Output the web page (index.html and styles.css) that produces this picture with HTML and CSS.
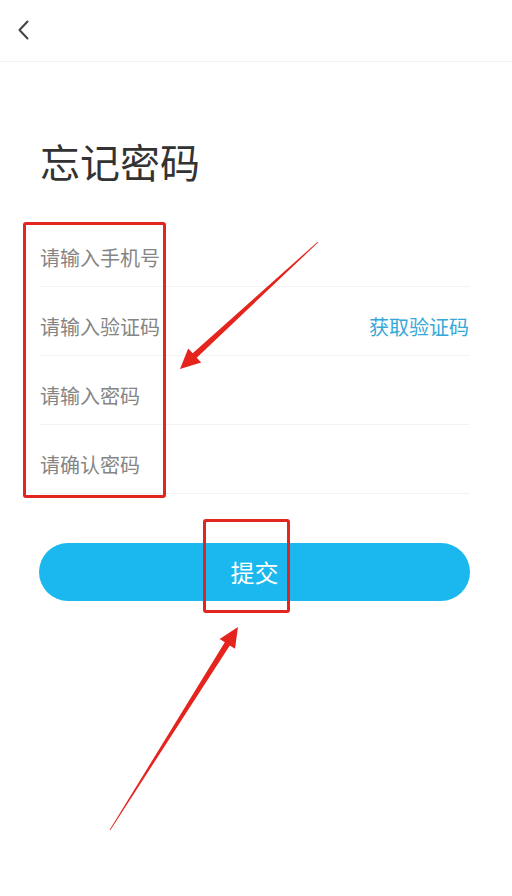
FILE: index.html
```html
<!DOCTYPE html>
<html lang="zh-CN">
<head>
<meta charset="utf-8">
<title>忘记密码</title>
<link rel="stylesheet" href="styles.css">
</head>
<body>
<div class="page">
  <header class="topbar">
    <svg class="back" width="14" height="20" viewBox="0 0 14 20"><path d="M10.5 1.5 L2.5 10 L10.5 18.5" fill="none" stroke="#444" stroke-width="2" stroke-linecap="round" stroke-linejoin="round"/></svg>
  </header>
  <main class="content">
    <h1 class="title">忘记密码</h1>
    <div class="form">
      <div class="row"><span class="ph">请输入手机号</span></div>
      <div class="row"><span class="ph">请输入验证码</span><span class="code">获取验证码</span></div>
      <div class="row"><span class="ph">请输入密码</span></div>
      <div class="row"><span class="ph">请确认密码</span></div>
    </div>
    <button class="submit">提交</button>
  </main>
  <div class="mark mark-fields"></div>
  <div class="mark mark-btn"></div>
  <svg class="arrows" width="512" height="896" viewBox="0 0 512 896">
    <polygon fill="#e5241d" points="318.3,242.3 196.7,357.7 201.2,362.6 180,369 188.2,348.4 192.7,353.3 317.7,241.7"/>
    <polygon fill="#e5241d" points="110.3,830.2 229.8,645.5 235.0,648.8 238,627 219.6,639.0 224.8,642.3 109.7,829.8"/>
  </svg>
</div>
</body>
</html>
```
FILE: styles.css
```css
html, body {
  margin: 0;
  padding: 0;
  background: #fff;
}
.page {
  position: relative;
  width: 512px;
  height: 896px;
  overflow: hidden;
  font-family: "Noto Sans CJK SC", "Noto Sans", sans-serif;
}
.topbar {
  height: 61px;
  border-bottom: 1px solid #f2f2f2;
  display: flex;
  align-items: center;
  padding-left: 17px;
  box-sizing: content-box;
}
.back {
  display: block;
  margin-top: -1px;
}
.content {
  padding: 0 42px 0 40px;
}
.title {
  margin: 79px 0 0 0;
  font-size: 40px;
  line-height: 40px;
  font-weight: 400;
  color: #333;
}
.form {
  margin-top: 37px;
}
.row {
  display: flex;
  justify-content: space-between;
  align-items: center;
  padding: 30px 0 18px 0;
  border-bottom: 1px solid #f3f3f3;
  font-size: 20px;
  line-height: 20px;
}
.ph {
  color: #858585;
}
.code {
  color: #34a8d8;
  margin-right: 1px;
}
.submit {
  display: block;
  width: 431px;
  margin: 49px 0 0 -1px;
  height: 58px;
  border: none;
  border-radius: 29px;
  background: #1ab8ee;
  color: #fff;
  font-family: "Noto Sans CJK SC", "Noto Sans", sans-serif;
  font-size: 24px;
  line-height: 58px;
  padding: 0;
}
.mark {
  position: absolute;
  border: 3px solid #e2251f;
  border-radius: 3px;
  box-sizing: border-box;
}
.mark-fields {
  left: 23px;
  top: 222px;
  width: 143px;
  height: 276px;
}
.mark-btn {
  left: 203px;
  top: 519px;
  width: 87px;
  height: 94px;
}
.arrows {
  position: absolute;
  left: 0;
  top: 0;
}
```
